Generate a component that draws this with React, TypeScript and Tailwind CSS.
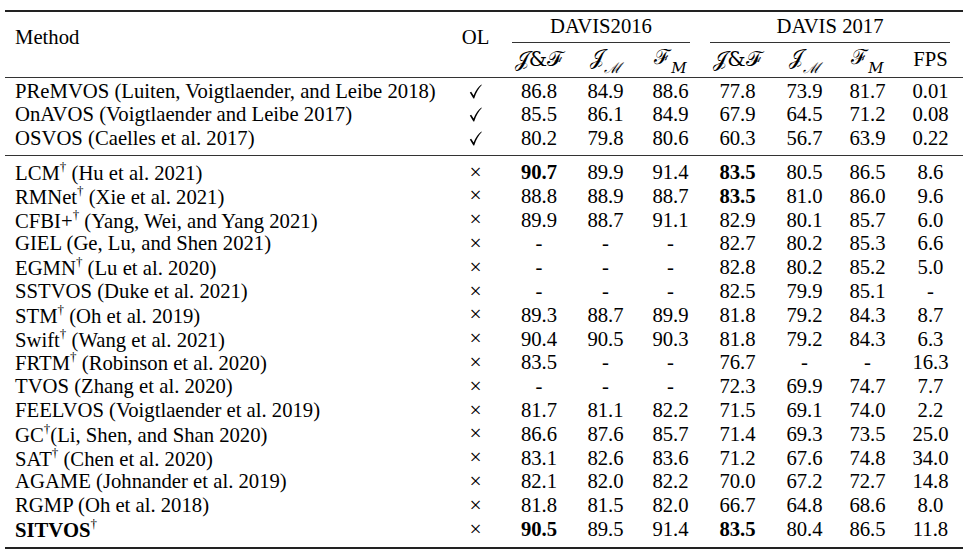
type Row = {
  name: string
  dagger?: boolean
  cite: string
  bold?: boolean
  ol: boolean
  vals: string[]
  strong?: number[]
}

const online: Row[] = [
  { name: 'PReMVOS', cite: ' (Luiten, Voigtlaender, and Leibe 2018)', ol: true, vals: ['86.8', '84.9', '88.6', '77.8', '73.9', '81.7', '0.01'] },
  { name: 'OnAVOS', cite: ' (Voigtlaender and Leibe 2017)', ol: true, vals: ['85.5', '86.1', '84.9', '67.9', '64.5', '71.2', '0.08'] },
  { name: 'OSVOS', cite: ' (Caelles et al. 2017)', ol: true, vals: ['80.2', '79.8', '80.6', '60.3', '56.7', '63.9', '0.22'] },
]

const offline: Row[] = [
  { name: 'LCM', dagger: true, cite: ' (Hu et al. 2021)', ol: false, vals: ['90.7', '89.9', '91.4', '83.5', '80.5', '86.5', '8.6'], strong: [0, 3] },
  { name: 'RMNet', dagger: true, cite: ' (Xie et al. 2021)', ol: false, vals: ['88.8', '88.9', '88.7', '83.5', '81.0', '86.0', '9.6'], strong: [3] },
  { name: 'CFBI+', dagger: true, cite: ' (Yang, Wei, and Yang 2021)', ol: false, vals: ['89.9', '88.7', '91.1', '82.9', '80.1', '85.7', '6.0'] },
  { name: 'GIEL', cite: ' (Ge, Lu, and Shen 2021)', ol: false, vals: ['-', '-', '-', '82.7', '80.2', '85.3', '6.6'] },
  { name: 'EGMN', dagger: true, cite: ' (Lu et al. 2020)', ol: false, vals: ['-', '-', '-', '82.8', '80.2', '85.2', '5.0'] },
  { name: 'SSTVOS', cite: ' (Duke et al. 2021)', ol: false, vals: ['-', '-', '-', '82.5', '79.9', '85.1', '-'] },
  { name: 'STM', dagger: true, cite: ' (Oh et al. 2019)', ol: false, vals: ['89.3', '88.7', '89.9', '81.8', '79.2', '84.3', '8.7'] },
  { name: 'Swift', dagger: true, cite: ' (Wang et al. 2021)', ol: false, vals: ['90.4', '90.5', '90.3', '81.8', '79.2', '84.3', '6.3'] },
  { name: 'FRTM', dagger: true, cite: ' (Robinson et al. 2020)', ol: false, vals: ['83.5', '-', '-', '76.7', '-', '-', '16.3'] },
  { name: 'TVOS', cite: ' (Zhang et al. 2020)', ol: false, vals: ['-', '-', '-', '72.3', '69.9', '74.7', '7.7'] },
  { name: 'FEELVOS', cite: ' (Voigtlaender et al. 2019)', ol: false, vals: ['81.7', '81.1', '82.2', '71.5', '69.1', '74.0', '2.2'] },
  { name: 'GC', dagger: true, cite: '(Li, Shen, and Shan 2020)', ol: false, vals: ['86.6', '87.6', '85.7', '71.4', '69.3', '73.5', '25.0'] },
  { name: 'SAT', dagger: true, cite: ' (Chen et al. 2020)', ol: false, vals: ['83.1', '82.6', '83.6', '71.2', '67.6', '74.8', '34.0'] },
  { name: 'AGAME', cite: ' (Johnander et al. 2019)', ol: false, vals: ['82.1', '82.0', '82.2', '70.0', '67.2', '72.7', '14.8'] },
  { name: 'RGMP', cite: ' (Oh et al. 2018)', ol: false, vals: ['81.8', '81.5', '82.0', '66.7', '64.8', '68.6', '8.0'] },
  { name: 'SITVOS', dagger: true, bold: true, cite: '', ol: false, vals: ['90.5', '89.5', '91.4', '83.5', '80.4', '86.5', '11.8'], strong: [0, 3] },
]

const cols = 'grid grid-cols-[441px_59px_68px_65px_65px_69px_65px_61px_65px]'
const math = "[font-family:'DejaVu_Serif','Liberation_Serif',serif]"

function Dagger() {
  return <sup className="relative -top-[1px] text-[13px] align-super leading-none font-normal">†</sup>
}

// thin LaTeX-style \checkmark
function Check() {
  return (
    <svg width="13" height="15" viewBox="0 0 13 15" className="inline-block">
      <path d="M0.8 8.6 L2.2 7.8 L4.6 11.6 C6.6 6.6 9.2 3 12.4 0.6 L12.8 1 C9.8 4 7.4 8.2 5.2 14.4 L4.4 14.4 Z" fill="#000" />
    </svg>
  )
}

function DataRow({ r, h }: { r: Row; h: string }) {
  return (
    <div className={`${cols} ${h} items-center`}>
      <div className={`pl-[10px] whitespace-nowrap ${r.bold ? 'font-bold' : ''}`}>
        {r.name}
        {r.dagger && <Dagger />}
        {r.cite}
      </div>
      <div className="flex justify-center">
        {r.ol ? <Check /> : <span className="text-[21.5px] leading-none">×</span>}
      </div>
      {r.vals.map((v, i) => (
        <div key={i} className={`text-center ${r.strong?.includes(i) ? 'font-bold' : ''}`}>
          {v}
        </div>
      ))}
    </div>
  )
}

function Sym({ base, sub }: { base: string; sub?: string }) {
  return (
    <span className={math}>
      {base}
      {sub && <sub className="text-[15px] italic align-sub leading-none">{sub}</sub>}
    </span>
  )
}

export default function App() {
  return (
    <div className="w-[967px] h-[554px] bg-white text-black font-['Liberation_Serif',serif] text-[20.7px] leading-none pt-[10px] pl-[5px]">
      <div className="w-[958px]">
        <div className="h-[1.5px] bg-[#222]" />
        <div className={`${cols} h-[65px]`}>
          <div className="pl-[10px] pt-[15px]">Method</div>
          <div className="pt-[15px] text-center">OL</div>
          <div className="col-span-3 flex flex-col">
            <div className="ml-[7px] mr-[13px] h-[31px] flex items-center justify-center border-b border-[#333]">DAVIS2016</div>
            <div className="grid grid-cols-[68px_65px_65px] flex-1 items-center">
              <div className="text-center"><Sym base="𝒥&ℱ" /></div>
              <div className="text-center"><Sym base="𝒥" sub="ℳ" /></div>
              <div className="text-center"><Sym base="ℱ" sub="M" /></div>
            </div>
          </div>
          <div className="col-span-4 flex flex-col">
            <div className="ml-[7px] mr-[13px] h-[31px] flex items-center justify-center border-b border-[#333]">DAVIS 2017</div>
            <div className="grid grid-cols-[69px_65px_61px_65px] flex-1 items-center">
              <div className="text-center"><Sym base="𝒥&ℱ" /></div>
              <div className="text-center"><Sym base="𝒥" sub="ℳ" /></div>
              <div className="text-center"><Sym base="ℱ" sub="M" /></div>
              <div className="text-center">FPS</div>
            </div>
          </div>
        </div>
        <div className="h-px bg-[#333]" />
        <div className="pt-[2px] pb-[4.5px]">
          {online.map((r) => (
            <DataRow key={r.name} r={r} h="h-[23.5px]" />
          ))}
        </div>
        <div className="h-px bg-[#333]" />
        <div className="pt-[5px] pb-[6px]">
          {offline.map((r) => (
            <DataRow key={r.name} r={r} h="h-[23.8px]" />
          ))}
        </div>
        <div className="h-[2px] bg-[#222]" />
      </div>
    </div>
  )
}
